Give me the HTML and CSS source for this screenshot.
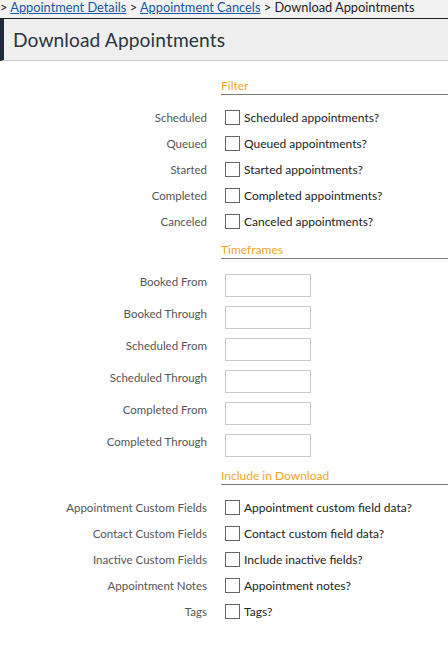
FILE: index.html
```html
<!DOCTYPE html>
<html>
<head>
<meta charset="utf-8">
<link rel="stylesheet" href="styles.css">
</head>
<body>
<div class="crumbs">&gt; <a href="#">Appointment Details</a> &gt; <a href="#">Appointment Cancels</a> &gt; Download Appointments</div>
<div class="header"><h1>Download Appointments</h1></div>
<form class="form">
  <div class="section">Filter</div>
  <div class="row"><label class="lbl">Scheduled</label><span class="box"></span><span class="txt">Scheduled appointments?</span></div>
  <div class="row"><label class="lbl">Queued</label><span class="box"></span><span class="txt">Queued appointments?</span></div>
  <div class="row"><label class="lbl">Started</label><span class="box"></span><span class="txt">Started appointments?</span></div>
  <div class="row"><label class="lbl">Completed</label><span class="box"></span><span class="txt">Completed appointments?</span></div>
  <div class="row"><label class="lbl">Canceled</label><span class="box"></span><span class="txt">Canceled appointments?</span></div>

  <div class="section s2">Timeframes</div>
  <div class="irow"><label class="lbl">Booked From</label><span class="inp"></span></div>
  <div class="irow"><label class="lbl">Booked Through</label><span class="inp"></span></div>
  <div class="irow"><label class="lbl">Scheduled From</label><span class="inp"></span></div>
  <div class="irow"><label class="lbl">Scheduled Through</label><span class="inp"></span></div>
  <div class="irow"><label class="lbl">Completed From</label><span class="inp"></span></div>
  <div class="irow"><label class="lbl">Completed Through</label><span class="inp"></span></div>

  <div class="section s3">Include in Download</div>
  <div class="row"><label class="lbl">Appointment Custom Fields</label><span class="box"></span><span class="txt">Appointment custom field data?</span></div>
  <div class="row"><label class="lbl">Contact Custom Fields</label><span class="box"></span><span class="txt">Contact custom field data?</span></div>
  <div class="row"><label class="lbl">Inactive Custom Fields</label><span class="box"></span><span class="txt">Include inactive fields?</span></div>
  <div class="row"><label class="lbl">Appointment Notes</label><span class="box"></span><span class="txt">Appointment notes?</span></div>
  <div class="row"><label class="lbl">Tags</label><span class="box"></span><span class="txt">Tags?</span></div>
</form>
</body>
</html>
```

FILE: styles.css
```css
html, body { margin: 0; padding: 0; background: #fff; }
body { font-family: "Lato", "DejaVu Sans", sans-serif; color: #222; }
.crumbs {
  background: #f2f2f2;
  height: 18px;
  line-height: 14px;
  font-size: 12.8px;
  color: #222;
  white-space: nowrap;
  overflow: hidden;
}
.crumbs a { color: #1a56a8; text-decoration: underline; }
.header {
  background: #efefef;
  border-top: 1px solid #222;
  border-bottom: 1px solid #cfcfcf;
  border-left: 4px solid #1e2b3a;
  height: 41px;
  display: flex;
  align-items: center;
}
.header h1 {
  margin: 0 0 0 9px;
  font-size: 19.2px;
  font-weight: normal;
  color: #2b3540;
  letter-spacing: 0.1px;
}
.form { padding-top: 17px; }
.section {
  margin-left: 221px;
  color: #f6a31e;
  font-size: 12px;
  height: 16px;
  line-height: 16px;
  border-bottom: 1px solid #7a7a7a;
  margin-bottom: 9px;
}
.s2 { margin-top: 8px; margin-bottom: 15px; }
.s3 { margin-top: 2px; margin-bottom: 9px; }
.row { display: flex; align-items: center; height: 26px; }
.irow { display: flex; align-items: center; height: 32px; }
.lbl {
  width: 207px;
  text-align: right;
  font-size: 11.5px;
  color: #555;
  flex: none;
}
.irow .lbl { align-self: flex-start; padding-top: 1px; }
.box {
  width: 13px; height: 13px;
  border: 1px solid #666;
  margin-left: 18px;
  margin-right: 4px;
  background: #fff;
  flex: none;
}
.txt { font-size: 12px; color: #222; }
.inp {
  margin-left: 18px;
  width: 84px; height: 21px;
  border: 1px solid #c8c8c8;
  background: #fff;
  align-self: flex-start;
}
```
